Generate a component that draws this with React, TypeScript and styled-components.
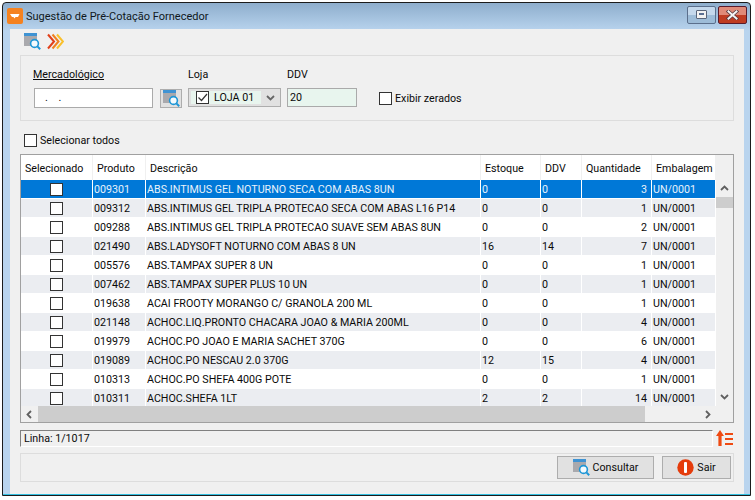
import React from "react";
import styled, { createGlobalStyle } from "styled-components";

const GlobalStyle = createGlobalStyle`
  html, body {
    margin: 0;
    padding: 0;
    background: #ffffff;
    font-family: Roboto, "Liberation Sans", sans-serif;
    font-size: 10.7px;
    color: #0a0a0a;
  }
`;

const COLUMNS = "72px 53px 335px 60px 41px 70px 64px";

const rows = [
  ["009301", "ABS.INTIMUS GEL NOTURNO SECA COM ABAS 8UN", "0", "0", "3"],
  ["009312", "ABS.INTIMUS GEL TRIPLA PROTECAO SECA COM ABAS L16 P14", "0", "0", "1"],
  ["009288", "ABS.INTIMUS GEL TRIPLA PROTECAO SUAVE SEM ABAS 8UN", "0", "0", "2"],
  ["021490", "ABS.LADYSOFT NOTURNO COM ABAS 8 UN", "16", "14", "7"],
  ["005576", "ABS.TAMPAX SUPER 8 UN", "0", "0", "1"],
  ["007462", "ABS.TAMPAX SUPER PLUS 10 UN", "0", "0", "1"],
  ["019638", "ACAI FROOTY MORANGO C/ GRANOLA 200 ML", "0", "0", "1"],
  ["021148", "ACHOC.LIQ.PRONTO CHACARA JOAO & MARIA 200ML", "0", "0", "4"],
  ["019979", "ACHOC.PO JOAO E MARIA SACHET 370G", "0", "0", "6"],
  ["019089", "ACHOC.PO NESCAU 2.0 370G", "12", "15", "4"],
  ["010313", "ACHOC.PO SHEFA 400G POTE", "0", "0", "1"],
  ["010311", "ACHOC.SHEFA 1LT", "2", "2", "14"],
];

const SearchIcon = () => (
  <svg width="17" height="17" viewBox="0 0 17 17">
    <rect x="0" y="1" width="13" height="12" fill="#a9a9ad" />
    <rect x="0" y="0" width="13" height="3" fill="#3f93d3" />
    <circle cx="10.5" cy="10.5" r="3.9" fill="#f4fafd" stroke="#1e96d6" strokeWidth="1.6" />
    <path d="M13.4 13.4 L16.2 16.2" stroke="#1e96d6" strokeWidth="2" />
  </svg>
);

const Chevrons = () => (
  <svg width="17" height="17" viewBox="0 0 17 17" fill="none" strokeWidth="2">
    <path d="M1 1.5 L7 8.5 L1 15.5" stroke="#e2401a" />
    <path d="M5.5 1.5 L11.5 8.5 L5.5 15.5" stroke="#f08020" />
    <path d="M10 1.5 L16 8.5 L10 15.5" stroke="#f9c02c" />
  </svg>
);

const AppIcon = () => (
  <svg width="16" height="16" viewBox="0 0 16 16">
    <rect width="16" height="16" rx="2" fill="#f58220" />
    <path d="M3 6 H12.5 L11 9 H8.5 L7.5 10.5 L6.5 9 H5 Z" fill="#ffffff" />
  </svg>
);

const SortIcon = () => (
  <svg width="17" height="16" viewBox="0 0 17 16" fill="#ef4a12">
    <path d="M4 0 L8 6 H5.6 V16 H2.4 V6 H0 Z" />
    <rect x="9" y="3" width="8" height="2" />
    <rect x="9" y="8" width="8" height="2" />
    <rect x="9" y="13" width="8" height="2" />
  </svg>
);

const ExitIcon = () => (
  <svg width="17" height="17" viewBox="0 0 17 17">
    <circle cx="8.5" cy="8.5" r="8.2" fill="#e53c0c" />
    <rect x="7" y="3" width="3" height="11" rx="1" fill="#ffffff" />
  </svg>
);

const CloseGlyph = () => (
  <svg width="13" height="10" viewBox="0 0 13 10" fill="none" strokeLinecap="square">
    <path d="M2.5 1.5 L10.5 8.5 M10.5 1.5 L2.5 8.5" stroke="#5a3a40" strokeWidth="3.6" />
    <path d="M2.5 1.5 L10.5 8.5 M10.5 1.5 L2.5 8.5" stroke="#f5f5f5" strokeWidth="2" />
  </svg>
);

const CheckMark = () => (
  <svg width="11" height="11" viewBox="0 0 11 11" fill="none" stroke="#333333" strokeWidth="1.2">
    <path d="M1.5 5.5 L4.5 8.5 L10 2" />
  </svg>
);

const Arrow = ({ dir, color = "#606060" }: { dir: "up" | "down" | "left" | "right"; color?: string }) => {
  const d = {
    up: "M1 6 L4.5 2.5 L8 6",
    down: "M1 3 L4.5 6.5 L8 3",
    left: "M6 1 L2.5 4.5 L6 8",
    right: "M3 1 L6.5 4.5 L3 8",
  }[dir];
  return (
    <svg width="9" height="9" viewBox="0 0 9 9" fill="none" stroke={color} strokeWidth="1.8">
      <path d={d} />
    </svg>
  );
};

export default function App() {
  return (
    <>
      <GlobalStyle />
      <Window>
        <TitleBar>
          <AppIcon />
          <Title>Sugestão de Pré-Cotação Fornecedor</Title>
          <Controls>
            <RestoreButton>
              <RestoreGlyph />
            </RestoreButton>
            <CloseButton>
              <CloseGlyph />
            </CloseButton>
          </Controls>
        </TitleBar>
        <Client>
          <Toolbar>
            <SearchIcon />
            <Chevrons />
          </Toolbar>
          <FilterBox>
            <Field $width={119}>
              <FieldLabel $underline>Mercadológico</FieldLabel>
              <TextBox $width={119}>{"   .    ."}</TextBox>
            </Field>
            <SearchButton>
              <SearchIcon />
            </SearchButton>
            <Field $width={93} $left={6}>
              <FieldLabel>Loja</FieldLabel>
              <SelectBox>
                <SelectValue>
                  <CheckBox>
                    <CheckMark />
                  </CheckBox>
                  LOJA 01
                </SelectValue>
                <Arrow dir="down" color="#666666" />
              </SelectBox>
            </Field>
            <Field $width={70} $left={6}>
              <FieldLabel>DDV</FieldLabel>
              <TextBox $width={70} $tinted $short>
                20
              </TextBox>
            </Field>
            <InlineCheck $left={22}>
              <CheckBox />
              Exibir zerados
            </InlineCheck>
          </FilterBox>
          <SelectAll>
            <InlineCheck $left={4}>
              <CheckBox />
              Selecionar todos
            </InlineCheck>
          </SelectAll>
          <Grid>
            <GridMain>
              <HeaderRow>
                <HeaderCell>Selecionado</HeaderCell>
                <HeaderCell>Produto</HeaderCell>
                <HeaderCell>Descrição</HeaderCell>
                <HeaderCell>Estoque</HeaderCell>
                <HeaderCell>DDV</HeaderCell>
                <HeaderCell>Quantidade</HeaderCell>
                <HeaderCell>Embalagem</HeaderCell>
              </HeaderRow>
              <RowList>
                {rows.map((r, i) => (
                  <DataRow key={r[0]} $selected={i === 0} $striped={i % 2 === 1}>
                    <CheckCell>
                      <CheckBox />
                    </CheckCell>
                    <Cell>{r[0]}</Cell>
                    <Cell>{r[1]}</Cell>
                    <Cell>{r[2]}</Cell>
                    <Cell>{r[3]}</Cell>
                    <Cell $right>{r[4]}</Cell>
                    <Cell>UN/0001</Cell>
                  </DataRow>
                ))}
              </RowList>
              <HScroll>
                <ScrollEnd>
                  <Arrow dir="left" />
                </ScrollEnd>
                <HThumb />
                <ScrollEnd>
                  <Arrow dir="right" />
                </ScrollEnd>
              </HScroll>
            </GridMain>
            <VScroll>
              <ScrollEnd>
                <Arrow dir="up" />
              </ScrollEnd>
              <VThumb />
              <ScrollEnd>
                <Arrow dir="down" />
              </ScrollEnd>
            </VScroll>
          </Grid>
          <StatusRow>
            <StatusText>Linha: 1/1017</StatusText>
            <SortIcon />
          </StatusRow>
          <ActionBox>
            <ActionButton $width={97}>
              <SearchIcon />
              Consultar
            </ActionButton>
            <ActionButton $width={69}>
              <ExitIcon />
              Sair
            </ActionButton>
          </ActionBox>
        </Client>
      </Window>
    </>
  );
}

const Window = styled.div`
  box-sizing: border-box;
  width: 749px;
  height: 494px;
  margin: 2px 0 0 2px;
  border: 1px solid #1c1c1c;
  border-radius: 4px 4px 0 0;
  padding-bottom: 1px;
  display: flex;
  flex-direction: column;
  background: linear-gradient(#8eaecd 0, #b9d4ee 28px, #b9d4ee 100%);
  box-shadow: inset 0 -1px 0 #33bfe0;
`;

const TitleBar = styled.div`
  height: 26px;
  flex: none;
  display: flex;
  align-items: center;
  padding: 0 3px 0 4px;
  box-sizing: border-box;
`;

const Title = styled.span`
  margin-left: 3px;
  font-size: 11px;
  color: #101820;
`;

const Controls = styled.div`
  margin-left: auto;
  margin-top: -3px;
  display: flex;
  gap: 2px;
`;

const RestoreButton = styled.div`
  box-sizing: border-box;
  width: 29px;
  height: 18px;
  border: 1px solid #5b6f8c;
  border-radius: 2px;
  background: linear-gradient(#c4d8ec 50%, #9dbcd8 50%);
  display: flex;
  align-items: center;
  justify-content: center;
`;

const RestoreGlyph = styled.div`
  box-sizing: border-box;
  width: 11px;
  height: 9px;
  background: #f2f2f2;
  border: 1px solid #59657a;
  border-radius: 1px;
  padding: 2px;
  &::after {
    content: "";
    display: block;
    height: 2px;
    background: #5a6f92;
  }
`;

const CloseButton = styled.div`
  box-sizing: border-box;
  width: 29px;
  height: 18px;
  border: 1px solid #5a1a2a;
  border-radius: 2px;
  background: linear-gradient(#e08a78 50%, #bf3c22 50%);
  display: flex;
  align-items: center;
  justify-content: center;
`;

const Client = styled.div`
  box-sizing: border-box;
  width: 734px;
  height: 465px;
  margin-left: 7px;
  padding: 0 10px;
  background: #f0f0f0;
  display: flex;
  flex-direction: column;
`;

const Toolbar = styled.div`
  height: 26px;
  flex: none;
  display: flex;
  align-items: flex-start;
  gap: 6px;
  padding: 4px 0 0 4px;
  box-sizing: border-box;
`;

const FilterBox = styled.div`
  box-sizing: border-box;
  height: 66px;
  flex: none;
  border: 1px solid #dddddd;
  display: flex;
  align-items: flex-end;
  padding: 0 0 12px 13px;
`;

const Field = styled.div<{ $width: number; $left?: number }>`
  width: ${({ $width }) => $width}px;
  margin-left: ${({ $left }) => $left ?? 0}px;
  display: flex;
  flex-direction: column;
  gap: 6px;
`;

const FieldLabel = styled.label<{ $underline?: boolean }>`
  font-size: 10.7px;
  line-height: 14px;
  margin-left: ${({ $underline }) => ($underline ? -1 : 0)}px;
  text-decoration: ${({ $underline }) => ($underline ? "underline" : "none")};
`;

const TextBox = styled.div<{ $width: number; $tinted?: boolean; $short?: boolean }>`
  box-sizing: border-box;
  width: ${({ $width }) => $width}px;
  height: ${({ $short }) => ($short ? 19 : 20)}px;
  margin-bottom: ${({ $short }) => ($short ? 1 : 0)}px;
  border: 1px solid #aaaaaa;
  background: ${({ $tinted }) => ($tinted ? "#e8f5ee" : "#ffffff")};
  padding-left: 2px;
  line-height: 17px;
  white-space: pre;
`;

const SearchButton = styled.div`
  box-sizing: border-box;
  width: 22px;
  height: 19px;
  margin-left: 7px;
  border: 1px solid #adadad;
  background: #e1e1e1;
  display: flex;
  align-items: center;
  justify-content: center;
`;

const SelectBox = styled.div`
  box-sizing: border-box;
  height: 19px;
  margin-bottom: 1px;
  border: 1px solid #adadad;
  background: #e1e1e1;
  padding: 2px 5px 2px 2px;
  display: flex;
  align-items: center;
  justify-content: space-between;
`;

const SelectValue = styled.div`
  width: 70px;
  height: 13px;
  background: #e8f5ee;
  display: flex;
  align-items: center;
  gap: 5px;
  padding-left: 5px;
  box-sizing: border-box;
`;

const CheckBox = styled.span`
  box-sizing: border-box;
  width: 13px;
  height: 13px;
  flex: none;
  border: 1px solid #333333;
  background: #ffffff;
  display: inline-flex;
  align-items: center;
  justify-content: center;
`;

const InlineCheck = styled.div<{ $left: number }>`
  margin-left: ${({ $left }) => $left}px;
  display: flex;
  align-items: center;
  gap: 3px;
  line-height: 13px;
  height: 20px;
`;

const SelectAll = styled.div`
  height: 33px;
  flex: none;
  display: flex;
  align-items: flex-end;
  padding-bottom: 4px;
  box-sizing: border-box;
`;

const Grid = styled.div`
  box-sizing: border-box;
  height: 269px;
  flex: none;
  border: 1px solid #a0a0a0;
  background: #f0f0f0;
  display: flex;
`;

const GridMain = styled.div`
  width: 695px;
  display: flex;
  flex-direction: column;
  background: #ffffff;
`;

const HeaderRow = styled.div`
  display: grid;
  grid-template-columns: ${COLUMNS};
  height: 25px;
  flex: none;
`;

const HeaderCell = styled.div`
  padding-left: 4px;
  line-height: 27px;
  border-right: 1px solid #f0f0f0;
  white-space: nowrap;
  overflow: hidden;
`;

const RowList = styled.div`
  flex: 1;
  overflow: hidden;
`;

const DataRow = styled.div<{ $selected?: boolean; $striped?: boolean }>`
  display: grid;
  grid-template-columns: ${COLUMNS};
  height: 18px;
  margin-bottom: 1px;
  line-height: 20px;
  background: ${({ $selected, $striped }) => ($selected ? "#0078d7" : $striped ? "#ebedf1" : "#ffffff")};
  color: ${({ $selected }) => ($selected ? "#e8f2fb" : "#0a0a0a")};
`;

const Cell = styled.div<{ $right?: boolean }>`
  padding: ${({ $right }) => ($right ? "0 4px 0 0" : "0 0 0 1px")};
  text-align: ${({ $right }) => ($right ? "right" : "left")};
  border-right: 1px solid #ffffff;
  white-space: nowrap;
  overflow: hidden;
`;

const CheckCell = styled(Cell)`
  display: flex;
  align-items: center;
  justify-content: center;
  padding: 0;
`;

const HScroll = styled.div`
  height: 16px;
  flex: none;
  background: #f0f0f0;
  display: flex;
`;

const ScrollEnd = styled.div`
  width: 17px;
  height: 17px;
  flex: none;
  display: flex;
  align-items: center;
  justify-content: center;
`;

const HThumb = styled.div`
  width: 607px;
  height: 16px;
  background: #cdcdcd;
  margin-right: 54px;
`;

const VScroll = styled.div`
  width: 17px;
  padding-top: 25px;
  display: flex;
  flex-direction: column;
`;

const VThumb = styled.div`
  height: 11px;
  background: #cdcdcd;
  margin-bottom: 180px;
`;

const StatusRow = styled.div`
  margin-top: 7px;
  height: 16px;
  flex: none;
  display: flex;
  align-items: center;
  gap: 3px;
`;

const StatusText = styled.div`
  box-sizing: border-box;
  width: 693px;
  height: 17px;
  border-style: solid;
  border-width: 1px;
  border-color: #808080 #ffffff #ffffff #808080;
  padding-left: 3px;
  line-height: 16px;
`;

const ActionBox = styled.div`
  box-sizing: border-box;
  margin-top: 7px;
  height: 29px;
  flex: none;
  border: 1px solid #dddddd;
  display: flex;
  justify-content: flex-end;
  align-items: center;
  gap: 8px;
  padding-right: 2px;
`;

const ActionButton = styled.div<{ $width: number }>`
  box-sizing: border-box;
  width: ${({ $width }) => $width}px;
  height: 23px;
  border: 1px solid #adadad;
  background: #e1e1e1;
  display: flex;
  align-items: center;
  justify-content: center;
  gap: 3px;
`;
